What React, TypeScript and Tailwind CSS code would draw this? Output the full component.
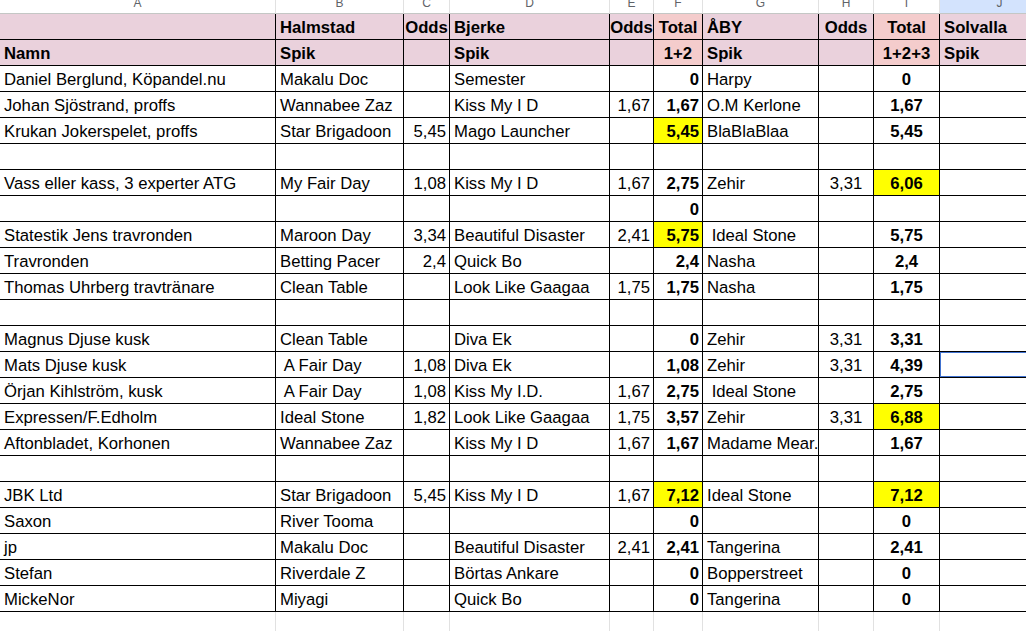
import React from 'react'

type Align = 'left' | 'right' | 'center'

const letters = ['A', 'B', 'C', 'D', 'E', 'F', 'G', 'H', 'I', 'J']
const dataAlign: Align[] = ['left', 'left', 'right', 'left', 'right', 'right', 'left', 'center', 'center', 'left']
const headAlign: Align[] = ['left', 'left', 'center', 'left', 'center', 'center', 'left', 'center', 'center', 'left']

const head1 = ['', 'Halmstad', 'Odds', 'Bjerke', 'Odds', 'Total', 'ÅBY', 'Odds', 'Total', 'Solvalla']
const head2 = ['Namn', 'Spik', '', 'Spik', '', '1+2', 'Spik', '', '1+2+3', 'Spik']

// [name, halmstad, odds, bjerke, odds, total, aby, odds, total, solvalla] + yellow flags for F / I
interface Row {
  cells: string[]
  yf?: boolean
  yi?: boolean
  selected?: boolean
}

const E = (): Row => ({ cells: ['', '', '', '', '', '', '', '', '', ''] })

const rows: Row[] = [
  { cells: ['Daniel Berglund, Köpandel.nu', 'Makalu Doc', '', 'Semester', '', '0', 'Harpy', '', '0', ''] },
  { cells: ['Johan Sjöstrand, proffs', 'Wannabee Zaz', '', 'Kiss My I D', '1,67', '1,67', 'O.M Kerlone', '', '1,67', ''] },
  { cells: ['Krukan Jokerspelet, proffs', 'Star Brigadoon', '5,45', 'Mago Launcher', '', '5,45', 'BlaBlaBlaa', '', '5,45', ''], yf: true },
  E(),
  { cells: ['Vass eller kass, 3 experter ATG', 'My Fair Day', '1,08', 'Kiss My I D', '1,67', '2,75', 'Zehir', '3,31', '6,06', ''], yi: true },
  { cells: ['', '', '', '', '', '0', '', '', '', ''] },
  { cells: ['Statestik Jens travronden', 'Maroon Day', '3,34', 'Beautiful Disaster', '2,41', '5,75', ' Ideal Stone', '', '5,75', ''], yf: true },
  { cells: ['Travronden', 'Betting Pacer', '2,4', 'Quick Bo', '', '2,4', 'Nasha', '', '2,4', ''] },
  { cells: ['Thomas Uhrberg travtränare', 'Clean Table', '', 'Look Like Gaagaa', '1,75', '1,75', 'Nasha', '', '1,75', ''] },
  E(),
  { cells: ['Magnus Djuse kusk', 'Clean Table', '', 'Diva Ek', '', '0', 'Zehir', '3,31', '3,31', ''] },
  { cells: ['Mats Djuse kusk', ' A Fair Day', '1,08', 'Diva Ek', '', '1,08', 'Zehir', '3,31', '4,39', ''], selected: true },
  { cells: ['Örjan Kihlström, kusk', ' A Fair Day', '1,08', 'Kiss My I.D.', '1,67', '2,75', ' Ideal Stone', '', '2,75', ''] },
  { cells: ['Expressen/F.Edholm', 'Ideal Stone', '1,82', 'Look Like Gaagaa', '1,75', '3,57', 'Zehir', '3,31', '6,88', ''], yi: true },
  { cells: ['Aftonbladet, Korhonen', 'Wannabee Zaz', '', 'Kiss My I D', '1,67', '1,67', 'Madame Mear.', '', '1,67', ''] },
  E(),
  { cells: ['JBK Ltd', 'Star Brigadoon', '5,45', 'Kiss My I D', '1,67', '7,12', 'Ideal Stone', '', '7,12', ''], yf: true, yi: true },
  { cells: ['Saxon', 'River Tooma', '', '', '', '0', '', '', '0', ''] },
  { cells: ['jp', 'Makalu Doc', '', 'Beautiful Disaster', '2,41', '2,41', 'Tangerina', '', '2,41', ''] },
  { cells: ['Stefan', 'Riverdale Z', '', 'Börtas Ankare', '', '0', 'Bopperstreet', '', '0', ''] },
  { cells: ['MickeNor', 'Miyagi', '', 'Quick Bo', '', '0', 'Tangerina', '', '0', ''] },
]

const alignCls: Record<Align, string> = {
  left: 'text-left pl-[4px]',
  right: 'text-right pr-[3px]',
  center: 'text-center',
}

function Cell({
  text,
  align,
  className = '',
  children,
}: {
  text: string
  align: Align
  className?: string
  children?: React.ReactNode
}) {
  return (
    <div
      className={`relative h-[26px] pt-[3px] border-r border-b border-black leading-[22px] whitespace-pre overflow-hidden ${alignCls[align]} ${className}`}
    >
      {text}
      {children}
    </div>
  )
}

export default function App() {
  return (
    <div
      className="w-[1026px] h-[631px] overflow-hidden bg-white text-black text-[16.7px]"
      style={{ fontFamily: '"Liberation Sans", Arial, sans-serif' }}
    >
      <div className="grid grid-cols-[276px_128px_46px_160px_44px_49px_116px_55px_66px_120px] w-[1060px]">
        {/* column letters, scrolled so only their lower half shows */}
        {letters.map((l) => (
          <div
            key={l}
            className={`h-[14px] overflow-hidden flex items-end justify-center pb-[4px] border-r border-b border-r-[#e1e1e1] border-b-[#c4c7c5] text-[12px] leading-none text-[#5f6368] ${
              l === 'J' ? 'bg-[#d3e3fd]' : 'bg-white'
            }`}
          >
            <span>{l}</span>
          </div>
        ))}

        {/* header rows */}
        {[head1, head2].map((h, ri) =>
          h.map((t, ci) => (
            <Cell
              key={`h${ri}-${ci}`}
              text={t}
              align={headAlign[ci]}
              className={`font-bold ${ci === 5 || ci === 8 ? 'bg-[#f4cccc]' : 'bg-[#ead1dc]'}`}
            />
          ))
        )}

        {/* data rows */}
        {rows.map((r, ri) =>
          r.cells.map((t, ci) => {
            const yellow = (ci === 5 && r.yf) || (ci === 8 && r.yi)
            return (
              <Cell
                key={`r${ri}-${ci}`}
                text={t}
                align={dataAlign[ci]}
                className={`${ci === 5 || ci === 8 ? 'font-bold' : ''} ${yellow ? 'bg-[#ffff00]' : ''}`}
              >
                {r.selected && ci === 9 && (
                  <div className="absolute -left-px -top-px right-0 -bottom-px border-2 border-[#4072d0]" />
                )}
              </Cell>
            )
          })
        )}

        {/* empty trailing row */}
        {letters.map((l) => (
          <div key={`e${l}`} className="h-[26px] border-r border-[#e1e1e1]" />
        ))}
      </div>
    </div>
  )
}
